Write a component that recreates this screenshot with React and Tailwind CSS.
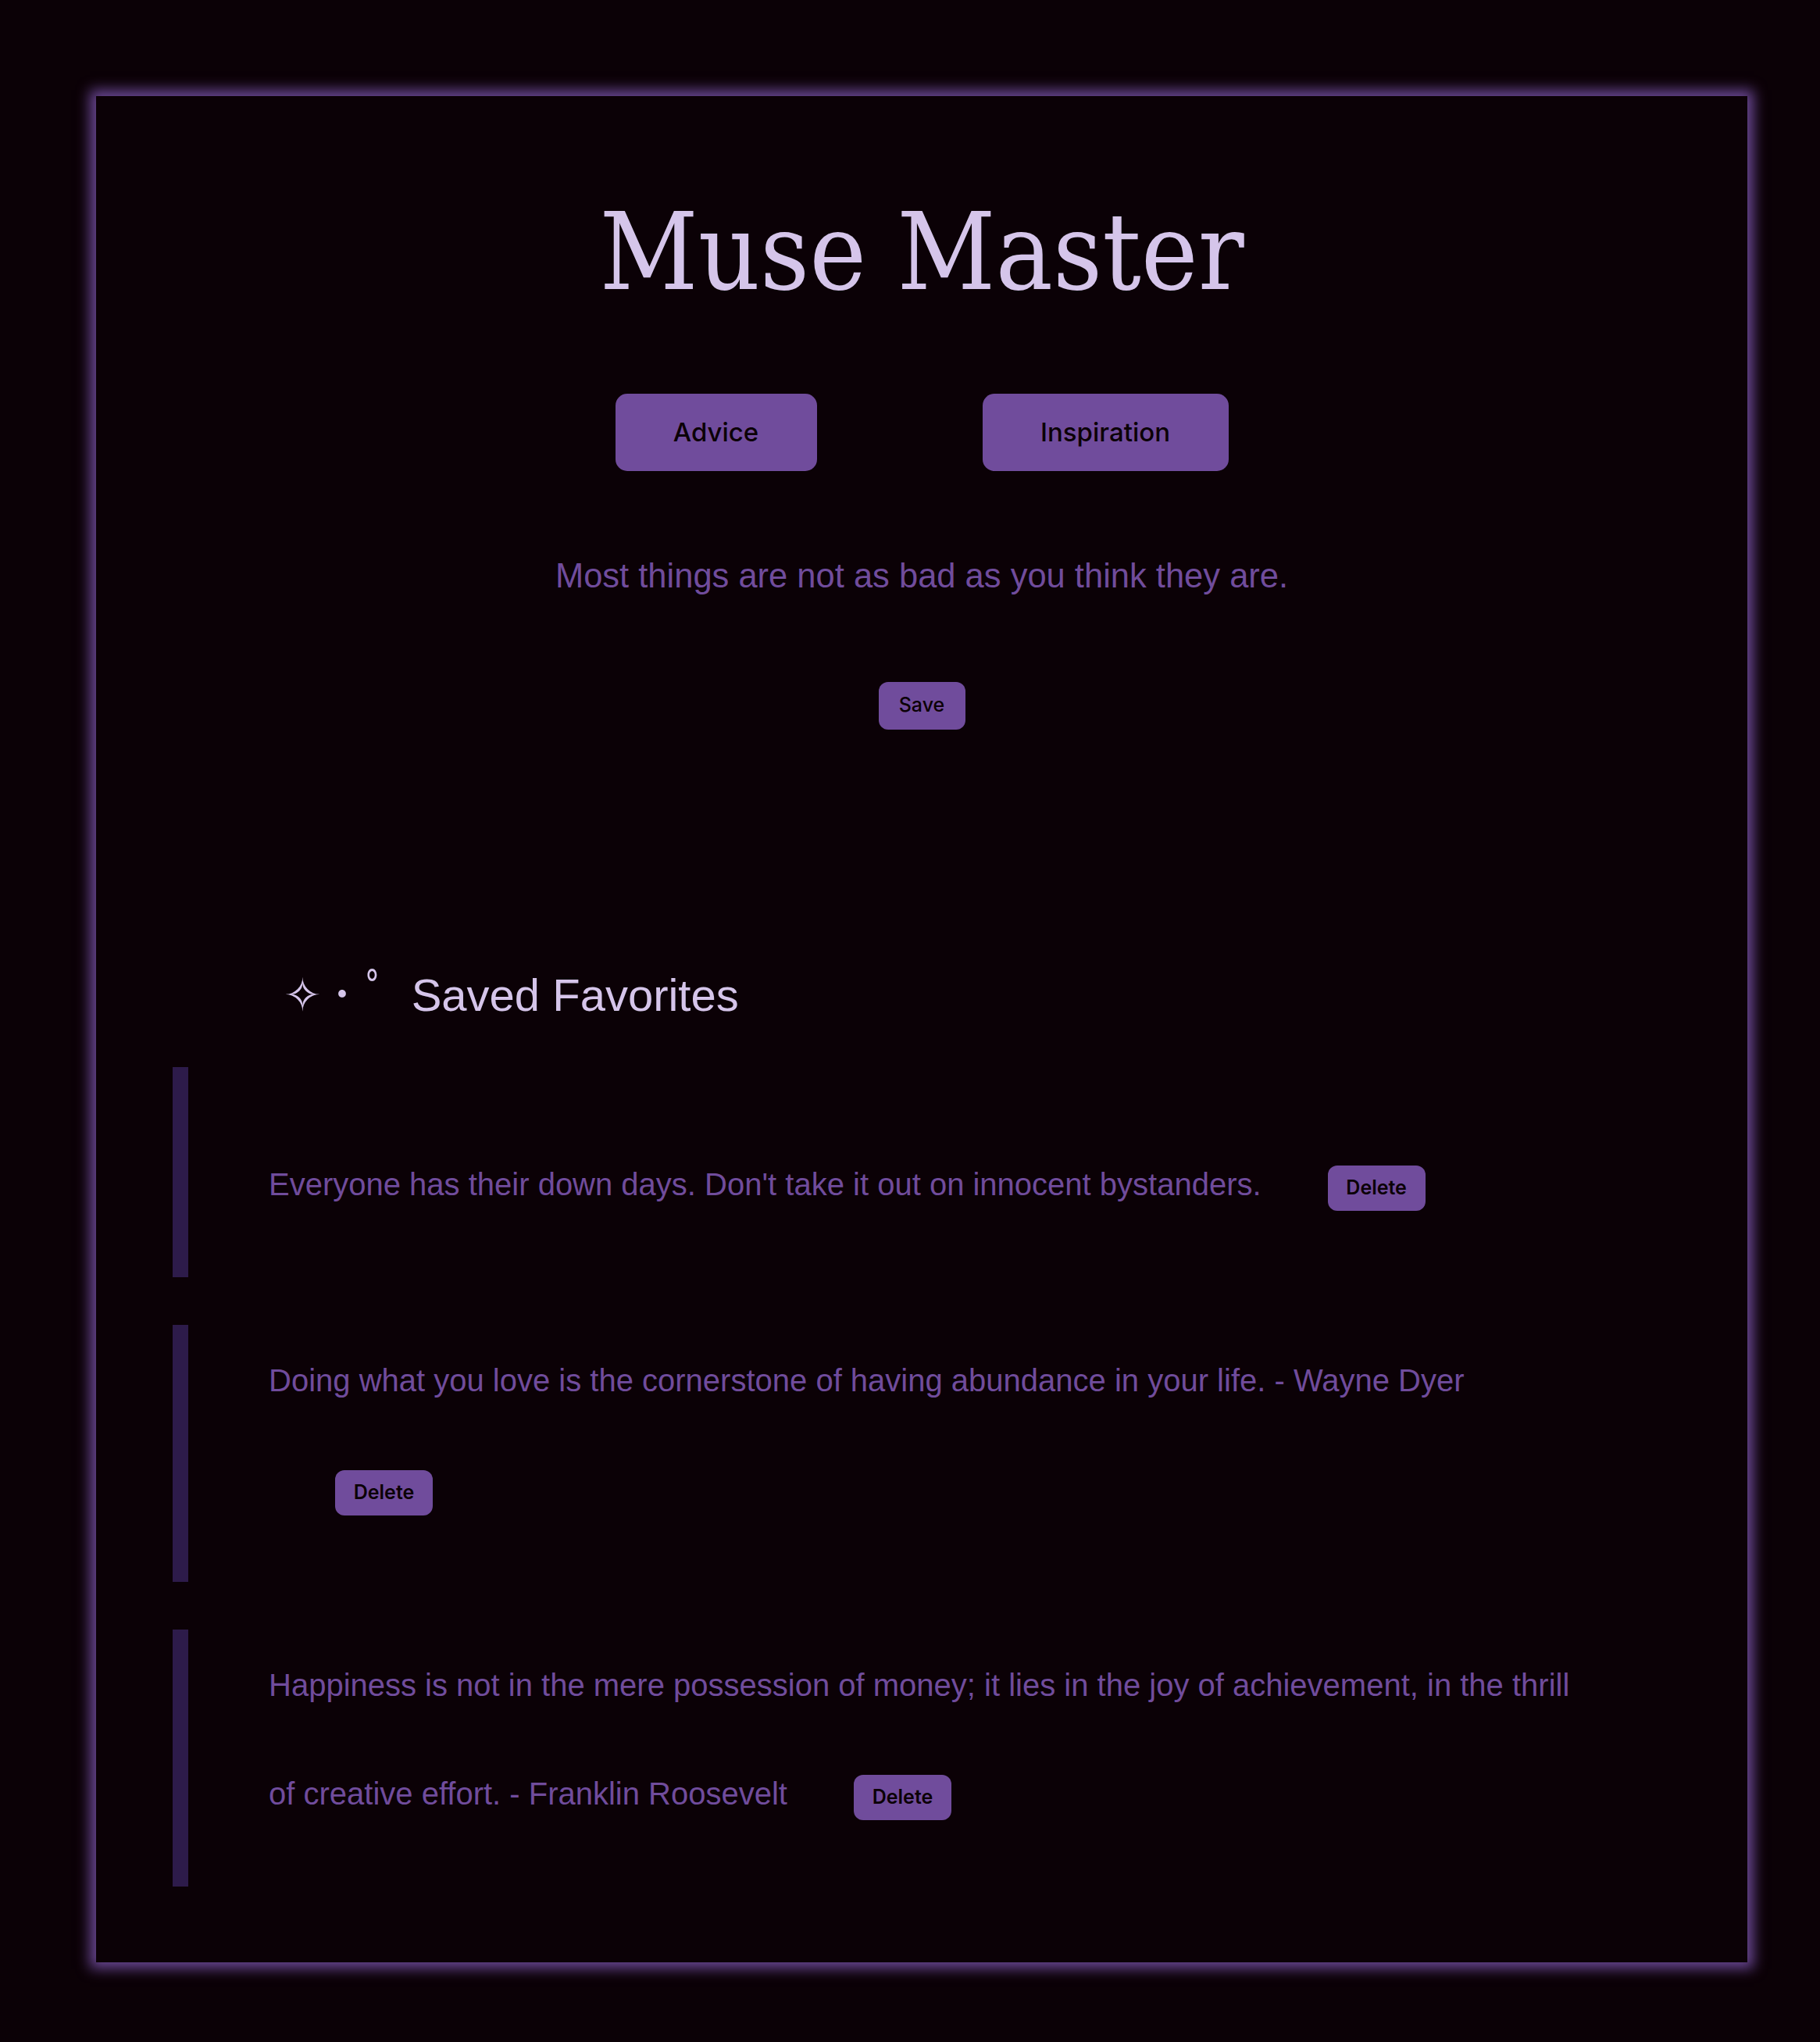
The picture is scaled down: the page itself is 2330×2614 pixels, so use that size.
import { useState } from 'react';

const favoritesSeed = [
    "Everyone has their down days. Don't take it out on innocent bystanders.",
    'Doing what you love is the cornerstone of having abundance in your life. - Wayne Dyer',
    'Happiness is not in the mere possession of money; it lies in the joy of achievement, in the thrill of creative effort. - Franklin Roosevelt',
];

const sans = "font-['Liberation_Sans',Arial,sans-serif]";
const ui = "font-['Inter','Liberation_Sans',sans-serif]";

export default function App() {
    const [message] = useState('Most things are not as bad as you think they are.');
    const [favorites, setFavorites] = useState(favoritesSeed);

    const remove = (i) => setFavorites(favorites.filter((_, idx) => idx !== i));

    return (
        <div className="min-h-screen bg-[#0b0106] pt-[123px] pb-[101px]">
            <main className="ml-[123px] mr-[93px] bg-[#0b0106] shadow-[0_0_16px_8px_rgba(114,78,160,0.9)] pb-[97px]">
                <section className="flex flex-col items-center">
                    <h1 className="mt-[131px] text-[137px] leading-[137px] text-[#d5c5ea] font-['DejaVu_Serif_Condensed','DejaVu_Serif',serif] font-stretch-condensed font-normal">
                        Muse Master
                    </h1>

                    <div className={`mt-[113px] flex gap-[212px] ${ui}`}>
                        <button className="w-[258px] h-[99px] rounded-[15px] bg-[#704c9c] text-[#0b0106] text-[33px] font-medium">
                            Advice
                        </button>
                        <button className="w-[315px] h-[99px] rounded-[15px] bg-[#704c9c] text-[#0b0106] text-[33px] font-medium">
                            Inspiration
                        </button>
                    </div>

                    <p className={`mt-[102px] text-[43.5px] leading-[64.5px] text-[#704c9c] ${sans}`}>{message}</p>

                    <button className={`mt-[103px] w-[111px] h-[61px] rounded-[12px] bg-[#704c9c] text-[#0b0106] text-[25px] font-medium ${ui}`}>
                        Save
                    </button>
                </section>

                <h2 className="mt-[290px] ml-[240px] h-[87px] flex items-baseline text-[58px] leading-[87px] text-[#d5c5ea] font-normal font-['Liberation_Sans','DejaVu_Sans','Noto_Sans_CJK_JP',sans-serif]">
                    <span className="font-['DejaVu_Sans',sans-serif]">✧</span>
                    <span className="ml-[12px] font-['Noto_Sans_CJK_JP',sans-serif]">･</span>
                    <span className="ml-[16px] text-[62px] font-['Noto_Sans_CJK_JP',sans-serif]">ﾟ</span>
                    <span className="ml-[27px]">Saved Favorites</span>
                </h2>

                <ul className="mt-[55px] flex flex-col gap-[61px]">
                    {favorites.map((quote, i) => (
                        <li
                            key={i}
                            className={`ml-[98px] mr-[98px] border-l-[20px] border-[#2d1b4a] pl-[103px] pr-[109px] pt-[41px] text-[40px] leading-[60px] text-[#704c9c] ${sans}`}
                        >
                            {quote}
                            <button
                                onClick={() => remove(i)}
                                className={`inline-block m-[85px] w-[125px] h-[58px] rounded-[12px] bg-[#704c9c] text-[#0b0106] text-[25px] leading-[37px] font-semibold align-baseline ${ui}`}
                            >
                                Delete
                            </button>
                        </li>
                    ))}
                </ul>
            </main>
        </div>
    );
}
